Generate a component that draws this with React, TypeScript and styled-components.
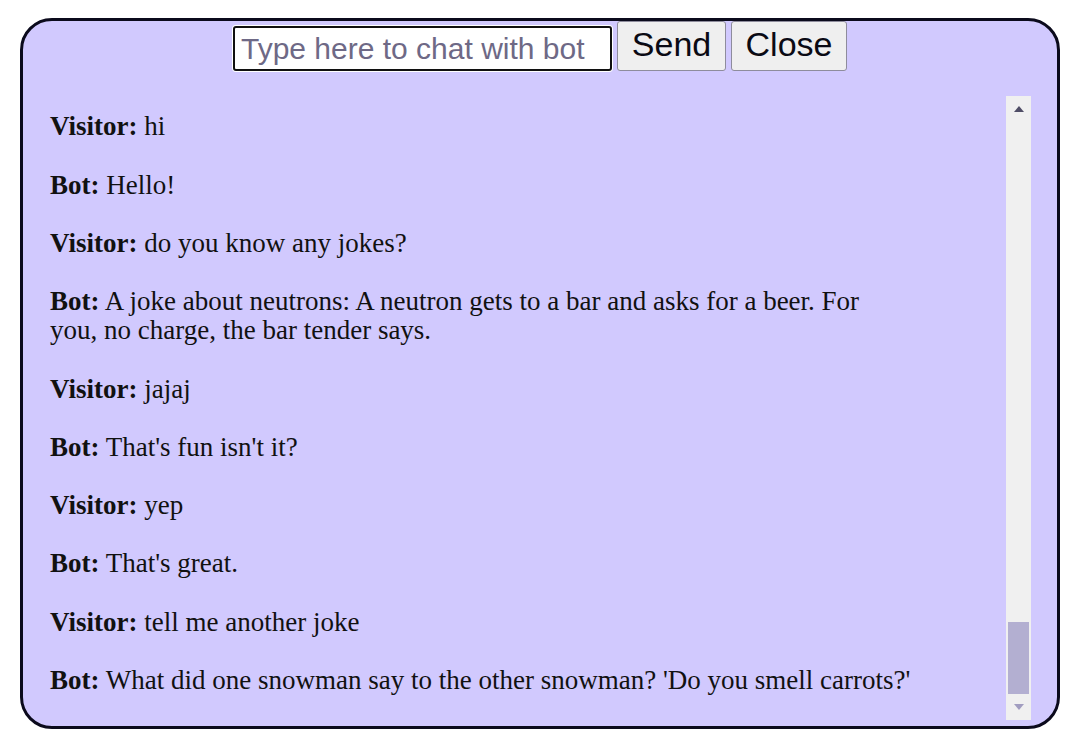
import React, { useLayoutEffect, useRef } from 'react';
import styled, { createGlobalStyle } from 'styled-components';

const GlobalStyle = createGlobalStyle`
  html, body {
    margin: 0;
    padding: 0;
    background: #ffffff;
  }
`;

const Page = styled.div`
  padding: 18px 10px 0 20px;
`;

const ChatBox = styled.div`
  box-sizing: border-box;
  height: 711px;
  display: flex;
  flex-direction: column;
  background: #d1c9fe;
  border: 3px solid #0b0a1c;
  border-radius: 32px;
`;

const InputRow = styled.form`
  display: flex;
  justify-content: center;
  align-items: flex-end;
  gap: 5px;
  margin: 0;
`;

const ChatInput = styled.input`
  box-sizing: border-box;
  width: 379px;
  height: 45px;
  padding: 2px 6px;
  font-family: 'Liberation Sans', Arial, sans-serif;
  font-size: 30px;
  color: #111;
  background: #ffffff;
  border: 2px solid #101010;
  border-radius: 3px;
  box-shadow: 0 0 0 1px #ffffff;
  outline: none;

  &::placeholder {
    color: #6e6986;
  }
`;

const ActionButton = styled.button<{ $width: number }>`
  box-sizing: border-box;
  width: ${({ $width }) => $width}px;
  height: 50px;
  padding: 0 0 4px;
  font-family: 'Liberation Sans', Arial, sans-serif;
  font-size: 34px;
  color: #0a0a14;
  background: #efefef;
  border: 1px solid #8e8c9c;
  border-radius: 3px;
`;

const ScrollArea = styled.div`
  flex: 1;
  min-height: 0;
  display: flex;
  margin: 25px 26px 6px 26px;
`;

const Viewport = styled.div`
  flex: 1;
  min-width: 0;
  overflow-y: auto;
  scrollbar-width: none;

  &::-webkit-scrollbar {
    display: none;
  }
`;

const Log = styled.div`
  box-sizing: border-box;
  min-height: 4960px;
  display: flex;
  flex-direction: column;
  justify-content: flex-end;
  gap: 29.3px;
  padding: 0 0 25px 1px;
`;

const Message = styled.p`
  margin: 0;
  max-width: 861.5px;
  font-family: 'Liberation Serif', 'Times New Roman', serif;
  font-size: 27px;
  line-height: 29px;
  color: #111111;
`;

const Speaker = styled.b`
  font-weight: 700;
`;

const ScrollTrack = styled.div`
  width: 25px;
  display: flex;
  flex-direction: column;
  background: #f0f0f0;
`;

const ScrollButton = styled.div`
  height: 26px;
  display: flex;
  align-items: center;
  justify-content: center;
`;

const Arrow = styled.div<{ $dir: 'up' | 'down' }>`
  width: 0;
  height: 0;
  border-left: 5.5px solid transparent;
  border-right: 5.5px solid transparent;
  ${({ $dir }) => ($dir === 'up' ? 'border-bottom: 6px solid #4f4d66;' : 'border-top: 6px solid #a19dc0;')}
`;

const TrackSpace = styled.div`
  flex: 1;
`;

const Thumb = styled.div`
  height: 72px;
  margin: 0 2px;
  background: #b3afd1;
`;

type Entry = { from: 'Visitor' | 'Bot'; text: string };

const messages: Entry[] = [
  { from: 'Visitor', text: 'hi' },
  { from: 'Bot', text: 'Hello!' },
  { from: 'Visitor', text: 'do you know any jokes?' },
  {
    from: 'Bot',
    text: 'A joke about neutrons: A neutron gets to a bar and asks for a beer. For you, no charge, the bar tender says.',
  },
  { from: 'Visitor', text: 'jajaj' },
  { from: 'Bot', text: "That's fun isn't it?" },
  { from: 'Visitor', text: 'yep' },
  { from: 'Bot', text: "That's great." },
  { from: 'Visitor', text: 'tell me another joke' },
  { from: 'Bot', text: "What did one snowman say to the other snowman? 'Do you smell carrots?'" },
];

export default function App() {
  const scrollRef = useRef<HTMLDivElement>(null);

  useLayoutEffect(() => {
    const el = scrollRef.current;
    if (el) el.scrollTop = el.scrollHeight;
  }, []);

  return (
    <Page>
      <GlobalStyle />
      <ChatBox>
        <InputRow onSubmit={(e) => e.preventDefault()}>
          <ChatInput placeholder='Type here to chat with bot' />
          <ActionButton type='submit' $width={109}>
            Send
          </ActionButton>
          <ActionButton type='button' $width={116}>
            Close
          </ActionButton>
        </InputRow>

        <ScrollArea>
          <Viewport ref={scrollRef}>
            <Log>
              {messages.map((m, i) => (
                <Message key={i}>
                  <Speaker>{m.from}:</Speaker> {m.text}
                </Message>
              ))}
            </Log>
          </Viewport>
          <ScrollTrack>
            <ScrollButton>
              <Arrow $dir='up' />
            </ScrollButton>
            <TrackSpace />
            <Thumb />
            <ScrollButton>
              <Arrow $dir='down' />
            </ScrollButton>
          </ScrollTrack>
        </ScrollArea>
      </ChatBox>
    </Page>
  );
}
